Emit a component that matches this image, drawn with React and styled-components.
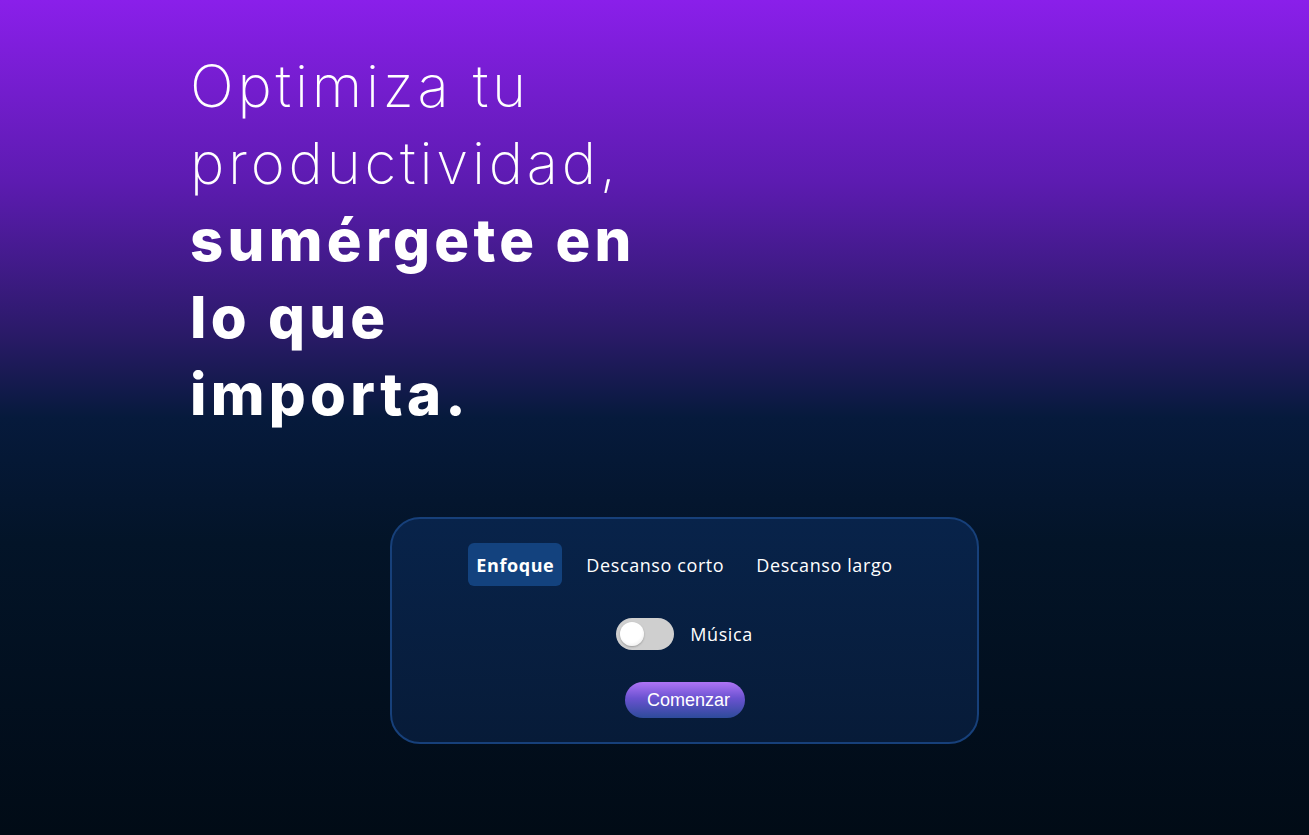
import React, { useState } from 'react';
import styled, { createGlobalStyle } from 'styled-components';

const GlobalStyle = createGlobalStyle`
  html, body {
    margin: 0;
    padding: 0;
  }
  body {
    font-family: "Inter", "Liberation Sans", sans-serif;
    background: #010b16;
  }
`;

const Page = styled.div`
  min-height: 835px;
  width: 100%;
  background: linear-gradient(
    to bottom,
    #8a1fea 0%,
    #5c1bb0 22%,
    #2a1a68 40%,
    #061a3c 50%,
    #031428 65%,
    #010b16 100%
  );
  display: flex;
  flex-direction: column;
  padding: 48px 0 0 190px;
  box-sizing: border-box;
`;

const Heading = styled.h1`
  margin: 0;
  font-family: "Inter", "Liberation Sans", sans-serif;
  font-size: 58px;
  line-height: 77px;
  color: #ffffff;
  font-weight: 200;
  letter-spacing: 3.8px;
`;

const Strong = styled.span`
  font-weight: 800;
  letter-spacing: 4.3px;
`;

const Card = styled.div`
  margin: 84px 0 0 200px;
  width: 589px;
  height: 227px;
  box-sizing: border-box;
  border: 2px solid #17407a;
  border-radius: 30px;
  background: linear-gradient(to bottom, #08234a, #071b38);
  display: flex;
  flex-direction: column;
  align-items: center;
  padding-top: 24px;
`;

const Tabs = styled.div`
  display: flex;
  gap: 16px;
`;

const Tab = styled.button`
  border: none;
  border-radius: 6px;
  padding: 0 8px;
  height: 43px;
  background: ${(p) => (p.$active ? '#13427e' : 'transparent')};
  color: #ffffff;
  font-family: "Open Sans", "Liberation Sans", sans-serif;
  font-size: 18px;
  font-weight: ${(p) => (p.$active ? 700 : 400)};
  letter-spacing: 0.6px;
  cursor: pointer;
`;

const ToggleRow = styled.div`
  display: flex;
  align-items: center;
  gap: 16px;
  margin-top: 32px;
`;

const Switch = styled.div`
  width: 58px;
  height: 32px;
  border-radius: 16px;
  background: #cfcfcf;
  display: flex;
  align-items: center;
  padding: 0 4px;
  box-sizing: border-box;
`;

const Knob = styled.div`
  width: 24px;
  height: 24px;
  border-radius: 50%;
  background: radial-gradient(circle at 45% 40%, #ffffff 55%, #e2e2e2 100%);
  box-shadow: 0 1px 2px rgba(0, 0, 0, 0.25);
`;

const Label = styled.span`
  color: #ffffff;
  font-family: "Open Sans", "Liberation Sans", sans-serif;
  font-size: 18px;
  letter-spacing: 0.6px;
`;

const StartButton = styled.button`
  margin-top: 32px;
  width: 120px;
  height: 36px;
  border: none;
  border-radius: 18px;
  background: linear-gradient(to bottom, #ae74f6 0%, #6a52d0 45%, #2d4b9a 100%);
  color: #ffffff;
  font-family: "Liberation Sans", Arial, sans-serif;
  font-size: 18px;
  cursor: pointer;
  padding: 0 0 0 8px;
`;

export default function App() {
  const [mode, setMode] = useState('focus');
  const tabs = [
    { id: 'focus', label: 'Enfoque' },
    { id: 'short', label: 'Descanso corto' },
    { id: 'long', label: 'Descanso largo' },
  ];

  return (
    <>
      <GlobalStyle />
      <Page>
        <Heading>
          Optimiza tu
          <br />
          productividad,
          <br />
          <Strong>
            sumérgete en
            <br />
            lo que
            <br />
            importa.
          </Strong>
        </Heading>
        <Card>
          <Tabs>
            {tabs.map((t) => (
              <Tab key={t.id} $active={mode === t.id} onClick={() => setMode(t.id)}>
                {t.label}
              </Tab>
            ))}
          </Tabs>
          <ToggleRow>
            <Switch>
              <Knob />
            </Switch>
            <Label>Música</Label>
          </ToggleRow>
          <StartButton>Comenzar</StartButton>
        </Card>
      </Page>
    </>
  );
}
